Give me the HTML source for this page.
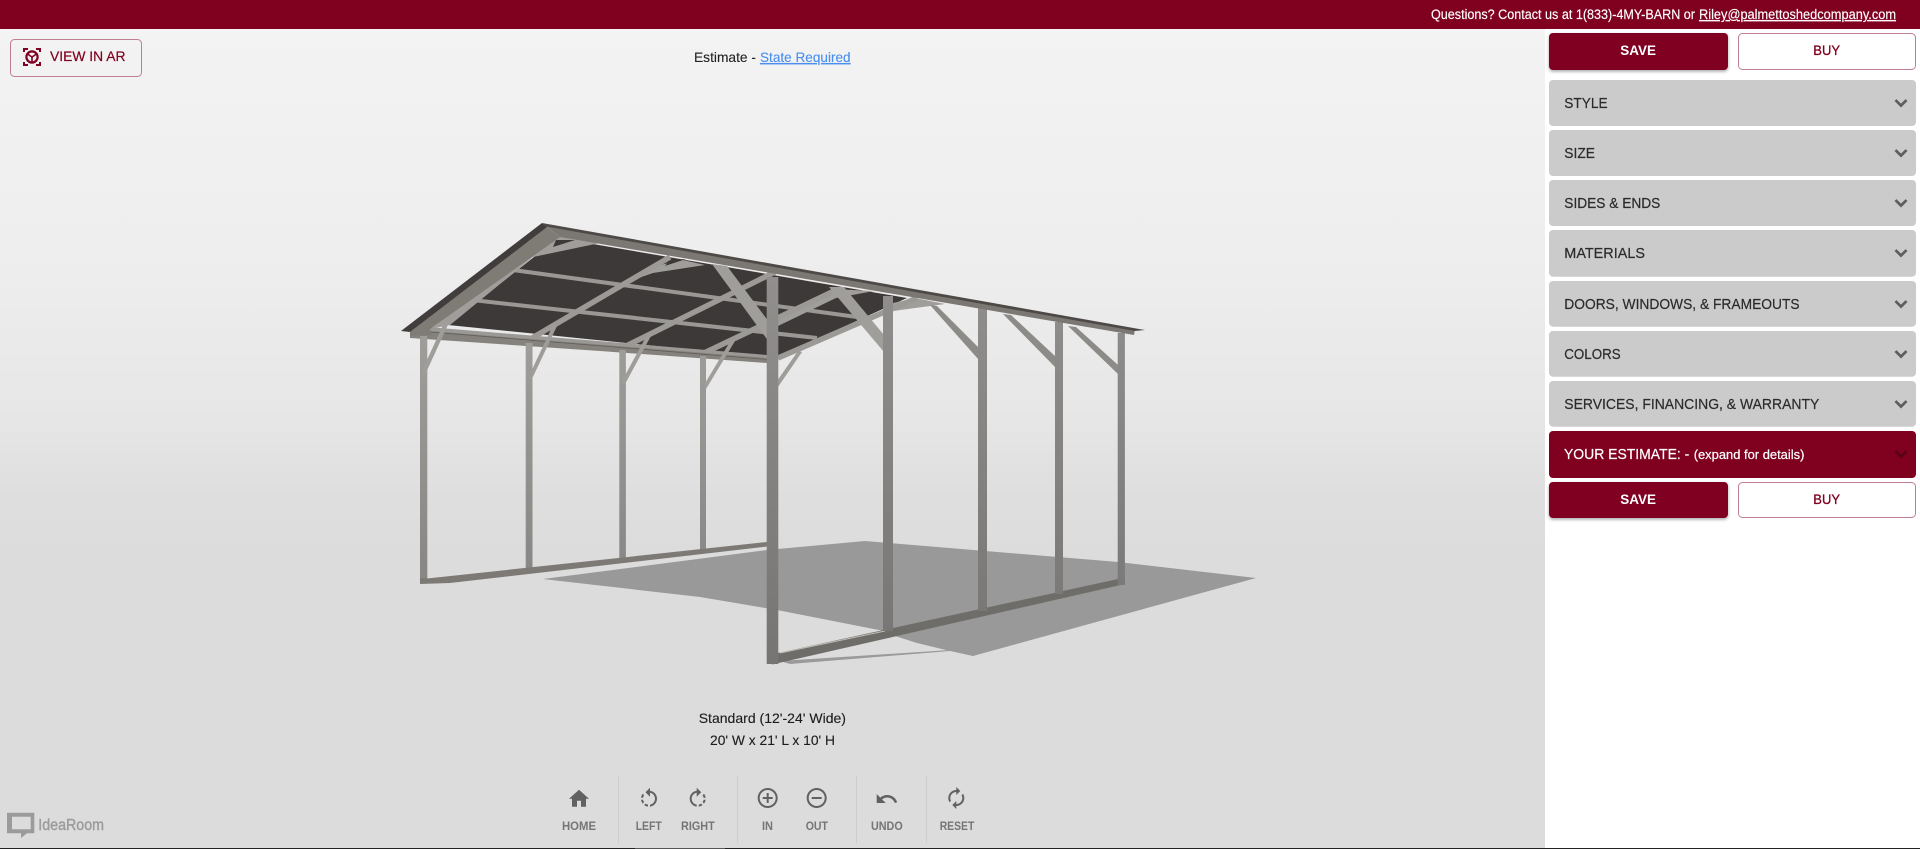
<!DOCTYPE html>
<html lang="en">
<head>
<meta charset="utf-8">
<title>Carport Configurator</title>
<style>
html,body{margin:0;padding:0;width:1920px;height:849px;overflow:hidden;background:#fff}
svg{display:block;position:absolute;left:0;top:0}
text{font-family:"Liberation Sans",sans-serif}
.p{font-size:15px;fill:#2b2b2b;stroke:#2b2b2b;stroke-width:.2}
.l{font-size:12px;font-weight:bold;fill:#757575}
.i{fill:#616161}
.c{fill:#5e5e5e;stroke:#5e5e5e;stroke-width:.7}
</style>
</head>
<body>
<svg width="1920" height="849" viewBox="0 0 1920 849" xmlns="http://www.w3.org/2000/svg">
<defs>
<linearGradient id="bg" x1="0" y1="29" x2="0" y2="560" gradientUnits="userSpaceOnUse">
<stop offset="0" stop-color="#f3f3f3"/>
<stop offset=".416" stop-color="#eeeeee"/>
<stop offset="0.717" stop-color="#e7e7e7"/>
<stop offset="0.887" stop-color="#dedede"/>
<stop offset="1" stop-color="#dcdcdc"/>
</linearGradient>
<linearGradient id="postL" x1="0" y1="330" x2="0" y2="585" gradientUnits="userSpaceOnUse">
<stop offset="0" stop-color="#a09e9b"/><stop offset="1" stop-color="#888684"/>
</linearGradient>
<linearGradient id="postR" x1="0" y1="280" x2="0" y2="660" gradientUnits="userSpaceOnUse">
<stop offset="0" stop-color="#918f8d"/><stop offset="1" stop-color="#777573"/>
</linearGradient>
<filter id="sh" x="-5%" y="-10%" width="110%" height="130%">
<feDropShadow dx="0" dy="1.5" stdDeviation="1.5" flood-color="#000" flood-opacity=".35"/>
</filter>
</defs>

<!-- viewer background -->
<rect x="0" y="29" width="1545" height="820" fill="url(#bg)"/>
<rect x="1545" y="29" width="375" height="820" fill="#fff"/>

<!-- ground shadow -->
<polygon points="543,579 767,550 865,541 1118,562 1256,578 973,656 950,651 917,643 895,636 889,632 777,610 700,597 560,581" fill="#999"/>

<!-- roof underside -->
<polygon points="558,238 907,298 775,358 448,325" fill="#3e3939"/>

<!-- purlins -->
<g stroke="#9a9894" fill="none">
<line x1="513" y1="270" x2="857" y2="317" stroke-width="4"/>
<line x1="472" y1="300" x2="817" y2="338" stroke-width="4"/>
</g>

<!-- rafters and top braces -->
<g fill="#a09e9a">
<polygon points="430,329 450,325 533,257 600,243 558,236"/>
<polygon points="633,280 660,265 683,260 705,265 653,273"/>
<polygon points="778,318 832,289 874,291 836,298 778,326"/>
<polygon points="893,303 915,298 945,304 893,311"/>
</g>
<polygon points="556,240 575,240 553,247" fill="#3e3939"/>
<polygon points="670,260 686,259 665,266" fill="#3e3939"/>
<g stroke="#9c9a96" fill="none" stroke-width="5.5">
<line x1="527" y1="341" x2="670" y2="257"/>
<line x1="622" y1="348" x2="775" y2="272"/>
<line x1="702" y1="354" x2="832" y2="292"/>
<line x1="778" y1="358" x2="917" y2="298"/>
</g>

<!-- diagonal knee braces -->
<g fill="#a09e9b">
<polygon points="712,264 727,266 772,326 772,346"/>
<polygon points="829,287 844,287 884,335 884,352"/>
</g>
<g fill="#8d8b88">
<polygon points="930,305 937,306 979,348 979,360"/>
<polygon points="1003,314 1011,315 1056,357 1056,368"/>
<polygon points="1068,326 1076,327 1118,365 1118,374"/>
</g>

<!-- eave strips -->
<polygon points="428,327 767,355 767,360 428,332" fill="#9b9995"/>
<polygon points="410,333 430,331 767,358 767,363 600,351 410,338" fill="#85827d"/>
<line x1="430" y1="332" x2="768" y2="359.5" stroke="#605e5a" stroke-width=".8"/>

<!-- rear / side posts -->
<g fill="url(#postL)">
<rect x="420" y="336" width="7.3" height="247"/>
<rect x="525.7" y="343" width="6.8" height="225"/>
<rect x="619.3" y="350" width="6.6" height="209"/>
<rect x="700" y="356" width="6" height="194"/>
</g>
<!-- corner braces on the near row -->
<g fill="#9f9d99">
<polygon points="422,371 448,314 452,316 424,377"/>
<polygon points="529,376 553,325 557,326 531,381"/>
<polygon points="622,381 648,333 652,334 624,386"/>
<polygon points="704,385 731,340 735,341 706,389"/>
<polygon points="777,381 798,351 802,352 778,387"/>
</g>

<!-- sills -->
<polygon points="420,584 420,578 427,578.5 767,542 767,546.5 450,583" fill="#7d7a76"/>
<polygon points="780,661 950,650 950,651 790,664" fill="#9a9a9a"/>
<polygon points="772,664.5 772,655 778,653 1118,579 1125,579 1125,584" fill="#6f6d69"/>
<line x1="780" y1="653" x2="885" y2="631" stroke="#c2beb6" stroke-width="1"/>

<!-- right side posts -->
<g fill="url(#postR)">
<rect x="883" y="296" width="10" height="335"/>
<rect x="978" y="308" width="9" height="303"/>
<rect x="1055" y="322" width="8" height="272"/>
<rect x="1117.7" y="333" width="7.2" height="252"/>
</g>
<rect x="766.7" y="277" width="11.6" height="387" fill="url(#postR)"/>

<!-- roof fascia and edge -->
<polygon points="546,226 1135,329.5 1134,335 560,237" fill="#7b7873"/>
<polygon points="546,226 560,237 430,329 432,335 410,336 410,332" fill="#7f7c76"/>
<polygon points="542,223 401,331 410,332 547,227" fill="#423d3d"/>
<polygon points="542,223 1145,330 1135,331 546,226.5" fill="#4d4947"/>

<!-- top bar -->
<rect x="0" y="0" width="1920" height="29" fill="#800020"/>
<g fill="#fff" stroke="#fff" stroke-width=".15">
<text x="1431" y="19" font-size="13.5" textLength="264" lengthAdjust="spacingAndGlyphs">Questions? Contact us at 1(833)-4MY-BARN or</text>
<text x="1699" y="19" font-size="13.5" text-decoration="underline" textLength="197" lengthAdjust="spacingAndGlyphs">Riley@palmettoshedcompany.com</text>
</g>

<!-- AR button -->
<rect x="10.5" y="39.5" width="131" height="37" rx="4" fill="none" stroke="#bf7f8f"/>
<g fill="none" stroke="#800020" stroke-width="2">
<path d="M24 52v-3h4M36 49h4v3M24 62v3h4M36 65h4v-3"/>
<circle cx="32" cy="57" r="5.6" stroke-width="2.2"/>
<path d="M32 57v5M32 57l-4.6-3M32 57l4.6-3" stroke-width="1.6"/>
</g>
<text x="50" y="61" font-size="14" fill="#800020" stroke="#800020" stroke-width=".2" textLength="75.5" lengthAdjust="spacingAndGlyphs">VIEW IN AR</text>

<!-- estimate -->
<text x="694" y="62" font-size="14" fill="#222" stroke="#222" stroke-width=".12" textLength="62" lengthAdjust="spacingAndGlyphs">Estimate -</text>
<text x="760" y="62" font-size="14" fill="#4a8ef0" stroke="#4a8ef0" stroke-width=".12" text-decoration="underline" textLength="90.6" lengthAdjust="spacingAndGlyphs">State Required</text>

<!-- top buttons -->
<rect x="1549" y="33" width="179" height="37" rx="4" fill="#800020" filter="url(#sh)"/>
<text x="1620.3" y="55" font-size="14" font-weight="bold" fill="#fff" textLength="35.7" lengthAdjust="spacingAndGlyphs">SAVE</text>
<rect x="1738.5" y="33.5" width="177" height="36" rx="4" fill="#fff" stroke="#bf7f8f"/>
<text x="1813.3" y="55" font-size="14" fill="#800020" stroke="#800020" stroke-width=".3" textLength="26.7" lengthAdjust="spacingAndGlyphs">BUY</text>

<!-- accordion -->
<g fill="#cbcbcb">
<rect x="1549" y="80" width="367" height="46" rx="4"/>
<rect x="1549" y="130" width="367" height="46" rx="4"/>
<rect x="1549" y="180" width="367" height="46" rx="4"/>
<rect x="1549" y="230" width="367" height="46.7" rx="4"/>
<rect x="1549" y="281" width="367" height="45.7" rx="4"/>
<rect x="1549" y="331" width="367" height="45.7" rx="4"/>
<rect x="1549" y="381" width="367" height="45.7" rx="4"/>
</g>
<rect x="1549" y="431" width="367" height="47" rx="4" fill="#800020"/>
<text class="p" x="1564.3" y="108" textLength="43.3" lengthAdjust="spacingAndGlyphs">STYLE</text>
<text class="p" x="1564.3" y="158" textLength="30.7" lengthAdjust="spacingAndGlyphs">SIZE</text>
<text class="p" x="1564.3" y="208" textLength="96" lengthAdjust="spacingAndGlyphs">SIDES &amp; ENDS</text>
<text class="p" x="1564.3" y="258" textLength="80.7" lengthAdjust="spacingAndGlyphs">MATERIALS</text>
<text class="p" x="1564.3" y="309" textLength="235.3" lengthAdjust="spacingAndGlyphs">DOORS, WINDOWS, &amp; FRAMEOUTS</text>
<text class="p" x="1564.3" y="359" textLength="56.3" lengthAdjust="spacingAndGlyphs">COLORS</text>
<text class="p" x="1564.3" y="409" textLength="255" lengthAdjust="spacingAndGlyphs">SERVICES, FINANCING, &amp; WARRANTY</text>
<g fill="#fff" stroke="#fff" stroke-width=".2">
<text x="1564" y="459" font-size="15" textLength="125.3" lengthAdjust="spacingAndGlyphs">YOUR ESTIMATE: -</text>
<text x="1693.7" y="459" font-size="13" textLength="110.7" lengthAdjust="spacingAndGlyphs">(expand for details)</text>
</g>

<g class="c">
<path transform="translate(1889 91)" d="M16.59 8.59L12 13.17 7.41 8.59 6 10l6 6 6-6z"/>
<path transform="translate(1889 141)" d="M16.59 8.59L12 13.17 7.41 8.59 6 10l6 6 6-6z"/>
<path transform="translate(1889 191)" d="M16.59 8.59L12 13.17 7.41 8.59 6 10l6 6 6-6z"/>
<path transform="translate(1889 241)" d="M16.59 8.59L12 13.17 7.41 8.59 6 10l6 6 6-6z"/>
<path transform="translate(1889 292)" d="M16.59 8.59L12 13.17 7.41 8.59 6 10l6 6 6-6z"/>
<path transform="translate(1889 342)" d="M16.59 8.59L12 13.17 7.41 8.59 6 10l6 6 6-6z"/>
<path transform="translate(1889 392)" d="M16.59 8.59L12 13.17 7.41 8.59 6 10l6 6 6-6z"/>
</g>
<path transform="translate(1889 442)" fill="#5a0017" stroke="#5a0017" stroke-width=".7" d="M16.59 8.59L12 13.17 7.41 8.59 6 10l6 6 6-6z"/>

<!-- bottom buttons -->
<rect x="1549" y="482" width="179" height="36" rx="4" fill="#800020" filter="url(#sh)"/>
<text x="1620.3" y="504" font-size="14" font-weight="bold" fill="#fff" textLength="35.7" lengthAdjust="spacingAndGlyphs">SAVE</text>
<rect x="1738.5" y="482.5" width="177" height="35" rx="4" fill="#fff" stroke="#bf7f8f"/>
<text x="1813.3" y="504" font-size="14" fill="#800020" stroke="#800020" stroke-width=".3" textLength="26.7" lengthAdjust="spacingAndGlyphs">BUY</text>

<!-- captions -->
<g fill="#1c1c1c" stroke="#1c1c1c" stroke-width=".12">
<text x="698.7" y="723" font-size="14" textLength="147.3" lengthAdjust="spacingAndGlyphs">Standard (12'-24' Wide)</text>
<text x="710" y="745" font-size="14" textLength="125" lengthAdjust="spacingAndGlyphs">20' W x 21' L x 10' H</text>
</g>

<!-- toolbar -->
<g fill="#cdcdcd">
<rect x="618" y="776" width="1" height="67"/>
<rect x="737" y="776" width="1" height="67"/>
<rect x="856" y="776" width="1" height="67"/>
<rect x="926" y="776" width="1" height="67"/>
</g>
<g class="i">
<path transform="translate(567 786.7)" d="M10 20v-6h4v6h5v-8h3L12 3 2 12h3v8z"/>
<path transform="translate(637 786.7)" d="M7.11 8.53L5.7 7.11C4.8 8.27 4.24 9.61 4.07 11h2.02c.14-.87.49-1.72 1.02-2.47zM6.09 13H4.07c.17 1.39.72 2.73 1.62 3.89l1.41-1.42c-.52-.75-.87-1.59-1.01-2.47zm1.01 5.32c1.16.9 2.51 1.44 3.9 1.61V17.9c-.87-.15-1.71-.49-2.46-1.03L7.1 18.32zM13 4.07V1L8.45 5.55 13 10V6.09c2.84.48 5 2.94 5 5.91s-2.16 5.43-5 5.91v2.02c3.95-.49 7-3.85 7-7.93s-3.05-7.44-7-7.93z"/>
<path transform="translate(685.7 786.7)" d="M15.55 5.55L11 1v3.07C7.06 4.56 4 7.92 4 12s3.05 7.44 7 7.93v-2.02c-2.84-.48-5-2.94-5-5.91s2.16-5.43 5-5.91V10l4.55-4.45zM19.93 11c-.17-1.39-.72-2.73-1.62-3.89l-1.42 1.42c.54.75.88 1.6 1.02 2.47h2.02zM13 17.9v2.02c1.39-.17 2.74-.71 3.9-1.61l-1.44-1.44c-.75.54-1.59.89-2.46 1.03zm3.89-2.42l1.42 1.41c.9-1.16 1.45-2.5 1.62-3.89h-2.02c-.14.87-.48 1.72-1.02 2.48z"/>
<path transform="translate(755.7 786)" d="M13 7h-2v4H7v2h4v4h2v-4h4v-2h-4V7zm-1-5C6.48 2 2 6.48 2 12s4.48 10 10 10 10-4.48 10-10S17.52 2 12 2zm0 18c-4.41 0-8-3.59-8-8s3.59-8 8-8 8 3.59 8 8-3.59 8-8 8z"/>
<path transform="translate(804.7 786)" d="M7 11v2h10v-2H7zm5-9C6.48 2 2 6.48 2 12s4.48 10 10 10 10-4.48 10-10S17.52 2 12 2zm0 18c-4.41 0-8-3.59-8-8s3.59-8 8-8 8 3.59 8 8-3.59 8-8 8z"/>
<path transform="translate(874.7 787)" d="M12.5 8c-2.65 0-5.05.99-6.9 2.6L2 7v9h9l-3.62-3.62c1.39-1.16 3.16-1.88 5.12-1.88 3.54 0 6.55 2.31 7.6 5.5l2.37-.78C21.08 11.03 17.15 8 12.5 8z"/>
<path transform="translate(944.3 786)" d="M12 6v3l4-4-4-4v3c-4.42 0-8 3.58-8 8 0 1.57.46 3.03 1.24 4.26L6.7 14.8c-.45-.83-.7-1.79-.7-2.8 0-3.31 2.69-6 6-6zm6.76 1.74L17.3 9.2c.44.84.7 1.79.7 2.8 0 3.31-2.69 6-6 6v-3l-4 4 4 4v-3c4.42 0 8-3.58 8-8 0-1.57-.46-3.03-1.24-4.26z"/>
</g>
<text class="l" x="562" y="830" textLength="34" lengthAdjust="spacingAndGlyphs">HOME</text>
<text class="l" x="635.7" y="830" textLength="26" lengthAdjust="spacingAndGlyphs">LEFT</text>
<text class="l" x="681" y="830" textLength="33.7" lengthAdjust="spacingAndGlyphs">RIGHT</text>
<text class="l" x="762" y="830" textLength="11" lengthAdjust="spacingAndGlyphs">IN</text>
<text class="l" x="805.7" y="830" textLength="22.3" lengthAdjust="spacingAndGlyphs">OUT</text>
<text class="l" x="871" y="830" textLength="31.7" lengthAdjust="spacingAndGlyphs">UNDO</text>
<text class="l" x="939.7" y="830" textLength="34.6" lengthAdjust="spacingAndGlyphs">RESET</text>

<!-- logo -->
<path fill="#9b9b9b" fill-rule="evenodd" d="M7 812.7H34.3V833.3H27L21 838V833.3H7ZM12 816.7V829.3H30.7V816.7Z"/>
<text x="38.3" y="830" font-size="16" fill="#9b9b9b" stroke="#9b9b9b" stroke-width=".4" textLength="65.7" lengthAdjust="spacingAndGlyphs">IdeaRoom</text>

<!-- bottom edge -->
<rect x="0" y="848" width="1920" height="1" fill="#222"/>
<rect x="635" y="848" width="90" height="1" fill="#555"/>
</svg>
</body>
</html>
